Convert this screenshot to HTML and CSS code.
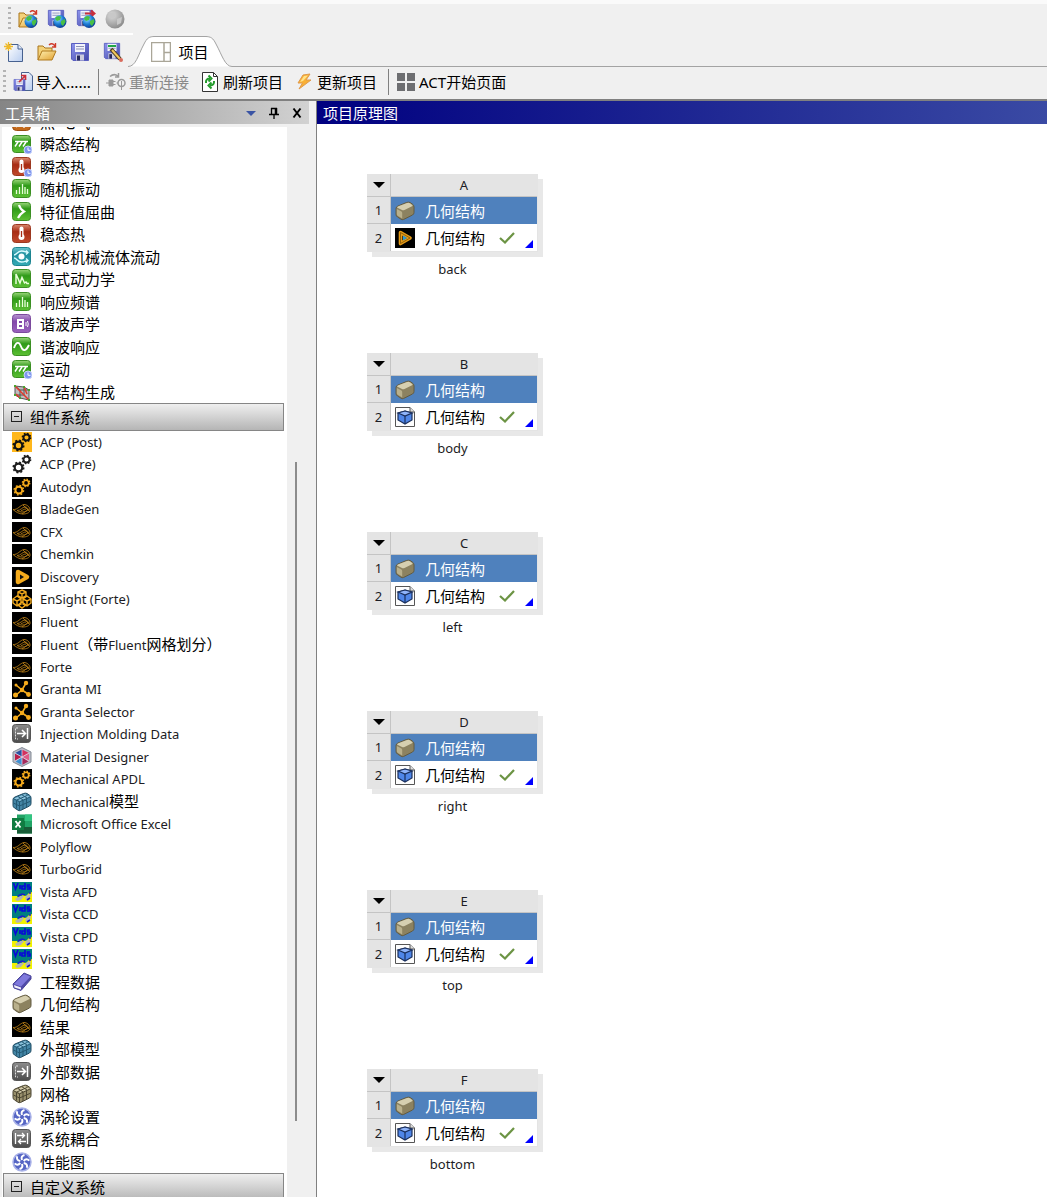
FILE: index.html
```html
<!DOCTYPE html>
<html lang="zh-CN">
<head>
<meta charset="utf-8">
<meta name="viewport" content="width=device-width, initial-scale=1">
<title>项目 - Workbench</title>
<link rel="stylesheet" href="styles.css">
</head>
<body>
<svg class="sprite" aria-hidden="true">
  <defs>
    <linearGradient id="gGreen" x1="0" y1="0" x2="0" y2="1"><stop offset="0" stop-color="#9ad67a"/><stop offset=".35" stop-color="#2f9a18"/><stop offset="1" stop-color="#5cc034"/></linearGradient>
    <linearGradient id="gRed" x1="0" y1="0" x2="0" y2="1"><stop offset="0" stop-color="#d98970"/><stop offset=".4" stop-color="#a82c14"/><stop offset="1" stop-color="#c0492c"/></linearGradient>
    <linearGradient id="gTeal" x1="0" y1="0" x2="0" y2="1"><stop offset="0" stop-color="#6cc4cd"/><stop offset=".4" stop-color="#1d8f9e"/><stop offset="1" stop-color="#35abb6"/></linearGradient>
    <linearGradient id="gPurple" x1="0" y1="0" x2="0" y2="1"><stop offset="0" stop-color="#b794d0"/><stop offset=".4" stop-color="#8449ab"/><stop offset="1" stop-color="#9a63bd"/></linearGradient>
    <linearGradient id="gGrey" x1="0" y1="0" x2="0" y2="1"><stop offset="0" stop-color="#8c8c8c"/><stop offset="1" stop-color="#4b4b4b"/></linearGradient>
    <linearGradient id="gFolder" x1="0" y1="0" x2="1" y2="1"><stop offset="0" stop-color="#fff0b0"/><stop offset="1" stop-color="#e0a030"/></linearGradient>
    <linearGradient id="gDisk" x1="0" y1="0" x2="1" y2="1"><stop offset="0" stop-color="#8f96ee"/><stop offset="1" stop-color="#4247a8"/></linearGradient>
    <linearGradient id="gPage" x1="0" y1="0" x2="1" y2="1"><stop offset="0" stop-color="#ffffff"/><stop offset="1" stop-color="#b8cdf0"/></linearGradient>
    <radialGradient id="gGlobe" cx=".35" cy=".3" r=".8"><stop offset="0" stop-color="#9fe4ff"/><stop offset=".5" stop-color="#1b7ed6"/><stop offset="1" stop-color="#0a2d86"/></radialGradient>
    <radialGradient id="gBall" cx=".35" cy=".3" r=".8"><stop offset="0" stop-color="#dcdcdc"/><stop offset="1" stop-color="#858585"/></radialGradient>

    <symbol id="clock" viewBox="0 0 20 20"><circle cx="16" cy="16" r="4" fill="#7d95ee" stroke="#c9d4fb"/><path d="M16 13.5V16.300H18.500" stroke="#fff" fill="none"/></symbol>
    <symbol id="structural" viewBox="0 0 20 20"><rect x=".5" y="1.500" width="18" height="17" rx="3" fill="url(#gGreen)" stroke="#3b8f23"/><path d="M3 7.500H16M6 8L3 12.500M10 8L7 12.500M14 8L11 12.500" stroke="#fff" stroke-width="1.500" fill="none"/><use href="#clock"/></symbol>
    <symbol id="thermal" viewBox="0 0 20 20"><rect x=".5" y=".5" width="18" height="18" rx="3" fill="url(#gRed)" stroke="#9c3820"/><rect x="7.500" y="2.500" width="4" height="10" rx="2" fill="#fff"/><circle cx="9.500" cy="13" r="3" fill="#fff"/><path d="M9.500 7V13" stroke="#a82c14" stroke-width="1.300"/></symbol>
    <symbol id="thermalTime" viewBox="0 0 20 20"><use href="#thermal"/><use href="#clock"/></symbol>
    <symbol id="bars" viewBox="0 0 20 20"><rect x=".5" y=".5" width="18" height="18" rx="3" fill="url(#gGreen)" stroke="#3b8f23"/><path d="M4.500 15V11M7.500 15V8M10.500 15V5M13 15V8M15.500 15V10" stroke="#e9ffd9" stroke-width="1.300"/></symbol>
    <symbol id="buckling" viewBox="0 0 20 20"><rect x=".5" y=".5" width="18" height="18" rx="3" fill="url(#gGreen)" stroke="#3b8f23"/><path d="M7 3Q8 7 12 9.500Q8 12 6 16" stroke="#fff" stroke-width="2.200" fill="none"/></symbol>
    <symbol id="turbo" viewBox="0 0 20 20"><rect x=".5" y=".5" width="18" height="18" rx="3" fill="url(#gTeal)" stroke="#1c8490"/><circle cx="9.500" cy="9.500" r="3" fill="#fff"/><path d="M2 8C5 8 5 4 9.500 4C13 4 14 5.500 16 5.500M2 11C5 11 5 15 9.500 15C13 15 14 13.500 16 13.500M14 3.500L16 5.500L14 7.500M14 11.500L16 13.500L14 15.500" stroke="#d8fbff" stroke-width="1.400" fill="none"/></symbol>
    <symbol id="explicit" viewBox="0 0 20 20"><rect x=".5" y=".5" width="18" height="18" rx="3" fill="url(#gGreen)" stroke="#3b8f23"/><path d="M4 15V5L8 14L10 8.500L12.500 14L14 13L15 14.500H17" stroke="#e9ffd9" stroke-width="1.500" fill="none"/></symbol>
    <symbol id="acoustic" viewBox="0 0 20 20"><rect x=".5" y=".5" width="18" height="18" rx="3" fill="url(#gPurple)" stroke="#7b4a9d"/><path d="M5 5H12V15H5Z" fill="#fff"/><path d="M7 7H10V9H7ZM7 11H10V13H7Z" fill="#8449ab"/><path d="M14 8V12M15.500 7Q17 10 15.500 13" stroke="#fff" fill="none"/></symbol>
    <symbol id="sine" viewBox="0 0 20 20"><rect x=".5" y=".5" width="18" height="18" rx="3" fill="url(#gGreen)" stroke="#3b8f23"/><path d="M2 11C4 5 7 4 9 9.500C11 15 14 14 17 8" stroke="#fff" stroke-width="1.900" fill="none"/></symbol>
    <symbol id="substructure" viewBox="0 0 20 20"><path d="M3 4L12 5L17 8V18L8 16L3 13Z" fill="#bdbdbd" stroke="#555"/><path d="M3 4L8 8L17 8M8 8V16M12 5V13L3 13M12 13L17 18" fill="none" stroke="#555"/><path d="M3 4L17 18M12 5L15 12M4 12L8 16" stroke="#e03a2c" stroke-width="1.500"/><path d="M2 3h2v2H2zM11 4h2v2h-2zM16 7h2v2h-2zM7 15h2v2H7zM16 17h2v2h-2zM2 12h2v2H2z" fill="#4aa52c"/></symbol>
    <symbol id="orangeCut" viewBox="0 0 20 20"><rect x=".5" y=".5" width="18" height="18" rx="4" fill="#c3691b" stroke="#9c4d10"/><path d="M4 15L8 12L12 15L16 12" stroke="#fff" fill="none" stroke-width="1.500"/></symbol>

    <g id="gears" fill="none"><circle cx="6.500" cy="13.500" r="3.800" stroke-width="2.200"/><circle cx="6.500" cy="13.500" r="5.300" stroke-width="1.500" stroke-dasharray="2 2.163"/><circle cx="14.500" cy="5.500" r="3" stroke-width="1.900"/><circle cx="14.500" cy="5.500" r="4.200" stroke-width="1.300" stroke-dasharray="1.600 1.699"/></g>
    <symbol id="gearsPost" viewBox="0 0 20 20"><rect width="20" height="20" fill="#ffb71b"/><use href="#gears" stroke="#111"/></symbol>
    <symbol id="gearsPre" viewBox="0 0 20 20"><use href="#gears" stroke="#1c1c1c"/></symbol>
    <symbol id="gearsDark" viewBox="0 0 20 20"><rect width="20" height="20" fill="#000"/><use href="#gears" stroke="#f5ab1c" transform="translate(1 1) scale(.9)"/></symbol>
    <symbol id="fluid" viewBox="0 0 20 20"><rect width="20" height="20" fill="#000"/><path d="M1 10.500C6 11 8 6 12 5.500C15 5.500 18 8 18 11C18 14 14 15 11 15C7 15 4 13 1 10.500ZM5 11.500C9 11.500 10 8 13 8C16 8 16.500 11 14.500 12C12 13.500 8 13.500 5 11.500M9 11.500C11 11.500 11.500 10 14 10M10 15L17 10M11 6L17 12" fill="none" stroke="#b37a16" stroke-width=".9"/></symbol>
    <symbol id="discovery" viewBox="0 0 20 20"><rect width="20" height="20" fill="#000"/><path d="M6 5L15 10L6 15Z" fill="none" stroke="#f5ab1c" stroke-width="4.500" stroke-linejoin="round"/><path d="M8 7.500L12 10L8 12.500Z" fill="#111"/></symbol>
    <symbol id="ensight" viewBox="0 0 20 20"><rect width="20" height="20" fill="#000"/><g fill="none" stroke="#f0a81c" stroke-width="1.400"><path d="M10 1L14 3V7L10 9L6 7V3ZM6 3L10 5L14 3M10 5V9M5 7L9 10V15L5 17L1 14V10ZM1 10L5 12L9 10M5 12V17M15 7L19 10V14L15 17L11 15V10ZM11 10L15 12L19 10M15 12V17M10 13L14 16L10 19L6 16Z"/></g></symbol>
    <symbol id="granta" viewBox="0 0 20 20"><rect width="20" height="20" fill="#000"/><path d="M10 11L14 4M10 11L4 6M10 11L4 16M10 11L16 15" stroke="#f5ab1c" stroke-width="1.600"/><g fill="#f5ab1c"><circle cx="14" cy="4" r="2.200"/><circle cx="4" cy="6" r="1.500"/><circle cx="10" cy="11" r="2.200"/><circle cx="3.500" cy="16" r="2.500"/><circle cx="16.500" cy="15.500" r="2.400"/></g></symbol>
    <symbol id="external" viewBox="0 0 20 20"><rect x=".5" y=".5" width="18" height="18" rx="3" fill="url(#gGrey)" stroke="#555"/><path d="M6 4H3.500V15H6" stroke="#ddd" stroke-dasharray="2 1" fill="none"/><path d="M5 9.500H13M10 6L13.500 9.500L10 13M15.500 4V15" stroke="#fff" stroke-width="1.500" fill="none"/></symbol>
    <symbol id="coupling" viewBox="0 0 20 20"><rect x=".5" y=".5" width="18" height="18" rx="3" fill="url(#gGrey)" stroke="#555"/><path d="M3.500 4V15M15.500 4V15M5 6.500H12M10 4L12.500 6.500L10 9M14 12.500H7M9 10L6.500 12.500L9 15" stroke="#fff" stroke-width="1.300" fill="none"/></symbol>
    <symbol id="material" viewBox="0 0 20 20"><path d="M10 .5L19 5V15L10 19.500L1 15V5Z" fill="#b9bdc6" stroke="#858b96"/><path d="M10 2.500L17 6L10 10Z" fill="#d3315e"/><path d="M10 2.500L3 6L10 10Z" fill="#2b4fa0"/><path d="M3 6.500V14L10 10Z" fill="#b81f4a"/><path d="M17 6.500V14L10 10Z" fill="#e05a86"/><path d="M3.500 14.500L10 18V10Z" fill="#3f8fd0"/><path d="M16.500 14.500L10 18V10Z" fill="#a52a5c"/><path d="M10 2V18M3 6L17 14M17 6L3 14" stroke="#e4e4f0" stroke-width=".7"/></symbol>
    <path id="boxShape" stroke-linejoin="round" d="M1 7.500Q1 5.800 3 5L11.500 1.500Q13.500 .8 15 1.500L17.500 3.200Q19 4 19 6V11.500Q19 13 17.500 14L8.500 18.500Q7 19 6 18.200L2.500 16Q1 15 1 13.500Z"/>
    <symbol id="geometry" viewBox="0 0 20 20"><use href="#boxShape" fill="#8c8260" stroke="#635b40"/><path d="M2 6.500Q2 5.500 4 5L12 2Q14 1.500 15 2.200L17.500 4.200Q17.800 5 16.500 5.500L9.500 9Q8 9.500 7 9Z" fill="#d6cfb0"/><path d="M1.800 8L6.500 10.500Q7.200 11 7.200 12V17.500L3 15Q1.800 14.500 1.800 13Z" fill="#b9b08c"/></symbol>
    <g id="meshLines" fill="none"><path d="M2 7L7.500 9.800L18.500 4.800M7.500 9.800V18M4.500 8.500V16.500M11 8.300V17M14.500 6.700V15.500M1.500 11L7.500 14L18.500 9.200M4.800 8L15.500 3.300M6 4.500L11 8M10 2.800L15 6"/></g>
    <symbol id="mesh" viewBox="0 0 20 20"><use href="#boxShape" fill="#99906c" stroke="#484330"/><path d="M2 6.500L13 2L18 5L8 9Z" fill="#d3cbaa"/><use href="#meshLines" stroke="#4d4732"/></symbol>
    <symbol id="model" viewBox="0 0 20 20"><use href="#boxShape" fill="#4385a5" stroke="#1f4b62"/><path d="M2 6.500L13 2L18 5L8 9Z" fill="#8cc3dc"/><use href="#meshLines" stroke="#245a75"/></symbol>
    <symbol id="excel" viewBox="0 0 20 20"><path d="M5 .5H20V19.500H5Z" fill="#21a366"/><path d="M13 .5H20V7H13Z" fill="#33c481"/><path d="M5 7H13V13H5Z" fill="#107c41"/><path d="M5 13H20V19.500H5Z" fill="#185c37"/><rect y="4" width="12" height="12" fill="#107c41"/><path d="M3.500 7L8.500 13.500M8.500 7L3.500 13.500" stroke="#fff" stroke-width="1.900"/></symbol>
    <symbol id="vista" viewBox="0 0 20 20"><rect width="20" height="20" fill="#007f7f"/><path d="M1.500 1L3.500 7L6 1M8 3V7M13 1V7H10V4H13M18 3H15.500V5H18V7H15" stroke="#0808d8" stroke-width="1.700" fill="none"/><path d="M0 20V14H5L6 16L11 13L14 14L17 11L20 10V20Z" fill="#f2f200"/><path d="M3 17L8 14L12 14L9 18L5 19ZM13 16L15 13L18 12L19 14L15 19Z" fill="#b4b4b4"/><path d="M6 14L10 12L13 13M15 18L18 16M17 11H19" stroke="#1b1bd0" stroke-width="1.600" fill="none"/></symbol>
    <symbol id="book" viewBox="0 0 20 20"><path d="M1 12L12 1L19 4V7L9 18.500L2 16Z" fill="#504ba8" stroke="#4a459a" stroke-linejoin="round"/><path d="M2 12L12 2L18.500 4.500L9 14.500Z" fill="#7f79dc"/><path d="M2 13L9 15.500V17.500L2.500 15.500Z" fill="#f1f1fb"/></symbol>
    <symbol id="swirl" viewBox="0 0 20 20"><circle cx="10" cy="10" r="9" fill="#5565c4" stroke="#a9b2e8" stroke-width="1.500"/><g fill="none" stroke="#fff" stroke-width="2"><path id="blade" d="M10 8Q8.500 4 12.500 3"/><use href="#blade" transform="rotate(60 10 10)"/><use href="#blade" transform="rotate(120 10 10)"/><use href="#blade" transform="rotate(180 10 10)"/><use href="#blade" transform="rotate(240 10 10)"/><use href="#blade" transform="rotate(300 10 10)"/></g><circle cx="10" cy="10" r="1.200" fill="#5565c4"/></symbol>

    <symbol id="globe" viewBox="0 0 20 20"><circle cx="13" cy="12.500" r="6.500" fill="url(#gGlobe)"/><path d="M9 8Q12 6 14 8L13 11L10 12L8 10ZM14 12L18 10L18.500 13L16 17L14 15Z" fill="#49c045"/></symbol>
    <symbol id="folder" viewBox="0 0 20 20"><path d="M1 18V4H6L8 6H15V9" fill="#f3d27a" stroke="#a9741b"/><path d="M1 18L5 9H19L15 18Z" fill="url(#gFolder)" stroke="#b07a1e"/><path d="M12 3Q15 0 18 4M18.500 1V5H15" stroke="#cf3a2a" stroke-width="1.400" fill="none"/></symbol>
    <symbol id="disk" viewBox="0 0 20 20"><path d="M1.500 1.500H18.500V18.500H3L1.500 17Z" fill="url(#gDisk)" stroke="#5a5fc0"/><rect x="5" y="2" width="10" height="8" fill="#f3f4fb"/><path d="M6 4.500H14M6 7H14" stroke="#8c92b8"/><rect x="6" y="12.500" width="8" height="6" fill="#ccd"/><rect x="7" y="13.500" width="3" height="5" fill="#26285c"/></symbol>
    <symbol id="folderGlobe" viewBox="0 0 20 20"><use href="#folder"/><use href="#globe"/></symbol>
    <symbol id="diskGlobe" viewBox="0 0 20 20"><use href="#disk" width="18" height="18"/><use href="#globe"/></symbol>
    <symbol id="diskArrow" viewBox="0 0 20 20"><use href="#disk" width="18" height="18"/><path d="M9 4.500H18M15 1.500L18.500 4.500L15 7.500" stroke="#c92f3b" stroke-width="2" fill="none"/><use href="#globe"/></symbol>
    <symbol id="ball" viewBox="0 0 20 20"><circle cx="10" cy="10" r="9.500" fill="url(#gBall)"/><path d="M5 4L10 3L11 7L7 10L3 8ZM12 10L17 8L16 14L12 16Z" fill="#c8c8c8"/></symbol>
    <symbol id="newFile" viewBox="0 0 20 20"><path d="M4.500 2.500H14L18.500 7V19.500H4.500Z" fill="url(#gPage)" stroke="#47618f"/><path d="M14 2.500V7H18.500" fill="#dfe9fa" stroke="#47618f"/><path d="M4.500 0V9M0 4.500H9M1.500 1.500L7.500 7.500M7.500 1.500L1.500 7.500" stroke="#efba2b" stroke-width="1.300"/></symbol>
    <symbol id="diskPen" viewBox="0 0 20 20"><use href="#disk" width="18" height="18"/><path d="M5 4H13" stroke="#21a648" stroke-width="2"/><path d="M8 7L17 17" stroke="#4b3b20" stroke-width="4"/><path d="M9 8L17 17" stroke="#f0c55a" stroke-width="2"/><circle cx="18" cy="18" r="2" fill="#d96b5c"/></symbol>
    <symbol id="import" viewBox="0 0 20 20"><path d="M8.500 .5H16L19.500 4V18.500H8.500Z" fill="url(#gPage)" stroke="#47618f"/><use href="#disk" y="6" width="13" height="14"/><path d="M6 10L12 4M8 3.500H12.500V8" stroke="#c92f3b" stroke-width="1.700" fill="none"/></symbol>
    <symbol id="reconnect" viewBox="0 0 20 20"><g stroke="#9a9a9a" fill="none"><path d="M3 8H7V14H3ZM7 9.500H9.500M7 12.500H9.500M0 11H3" fill="#9a9a9a"/><circle cx="15.500" cy="11" r="3.500" stroke-width="1.500"/><path d="M15.500 9V18M10.500 11H12"/><path d="M4 4.500Q8 1 12 4M12.500 1V5H9" stroke-width="1.500"/></g></symbol>
    <symbol id="refresh" viewBox="0 0 20 20"><path d="M2.500 .5H13.500L17.500 4.500V19.500H2.500Z" fill="#fff" stroke="#333"/><path d="M13.500 .5V4.500H17.500" fill="none" stroke="#333"/><path d="M6 11Q5.500 6.500 10 6.500M8.500 3.500L11.500 6.500L8.500 9.500M14 9Q14.500 13.500 10 13.500M11.500 10.500L8.500 13.500L11.500 16.500" stroke="#239b2c" stroke-width="2" fill="none"/></symbol>
    <symbol id="bolt" viewBox="0 0 20 20"><path d="M9 3L16 2L12 8H17L5 17L8.500 11H4Z" fill="#f9b034" stroke="#e09a4a" stroke-linejoin="round"/><path d="M10 4L14 3.500L9 9L6 10Z" fill="#ffe38a"/></symbol>
    <symbol id="tiles" viewBox="0 0 20 20"><path d="M1 1H9V9H1ZM11 1H19V9H11ZM1 11H9V19H1ZM11 11H19V19H11Z" fill="#6d6e71"/></symbol>
    <symbol id="layout" viewBox="0 0 20 20"><path d="M.5 .5H19.500V19.500H.5ZM13 .5V19.500M13 10.500H19.500" fill="#fff" stroke="#aaa698" stroke-width="1.500"/></symbol>
    <symbol id="discoveryCell" viewBox="0 0 20 20"><rect width="20" height="20" fill="#000"/><path d="M5.500 4.500L15 10L5.500 15.500Z" fill="#111" stroke="#e59b17" stroke-width="3.600" stroke-linejoin="round"/><path d="M5.500 4.500L15 10L5.500 15.500Z" fill="none" stroke="#6d4503" stroke-width=".7"/><path d="M8 7.500L12 10L8 12.500Z" fill="#2b9bd8"/></symbol>
    <symbol id="cubeDoc" viewBox="0 0 20 20"><path d="M.5 .5H15L19.500 5V19.500H.5Z" fill="#fdfdfd" stroke="#555"/><path d="M15 .5V5H19.500" fill="#ddd" stroke="#555"/><path d="M10 4L17 6V13L10 17L3 13V6Z" fill="#4f86e8" stroke="#1a2f5c" stroke-width="1.200"/><path d="M3 6L10 9L17 6L10 4Z" fill="#8fb4fa" stroke="#1a2f5c" stroke-width="1.200"/><path d="M10 9V17" stroke="#1a2f5c" stroke-width="1.200"/></symbol>
    <symbol id="check" viewBox="0 0 16 12"><path d="M1 6L6 10.500L15 1" fill="none" stroke="#6c9444" stroke-width="2.200"/></symbol>
  </defs>
</svg>

<div class="app">
  <header class="chrome">
    <div class="bar bar-remote">
      <span class="grip"></span>
      <button class="tool" aria-label="打开远程项目"><svg><use href="#folderGlobe"/></svg></button>
      <button class="tool" aria-label="保存到远程"><svg><use href="#diskGlobe"/></svg></button>
      <button class="tool" aria-label="发送更改"><svg><use href="#diskArrow"/></svg></button>
      <button class="tool" aria-label="远程连接" disabled><svg><use href="#ball"/></svg></button>
    </div>
    <div class="bar bar-file">
      <div class="file-tools">
        <button class="tool" aria-label="新建"><svg><use href="#newFile"/></svg></button>
        <button class="tool" aria-label="打开"><svg><use href="#folder"/></svg></button>
        <button class="tool" aria-label="保存"><svg><use href="#disk"/></svg></button>
        <button class="tool" aria-label="另存为"><svg><use href="#diskPen"/></svg></button>
      </div>
      <button class="tab">
        <svg class="tab-shape" viewBox="0 0 104 31" aria-hidden="true"><path d="M0 30.500C8 30.500 10 19 16 8C19 2 21 .5 27 .5H77C83 .5 85 2 88 8C94 19 97 30.500 104 30.500" fill="#fff" stroke="#a3a3a3"/></svg>
        <svg class="tab-icon"><use href="#layout"/></svg><span>项目</span>
      </button>
      <span class="tab-rule"></span>
    </div>
    <div class="bar bar-actions">
      <span class="grip"></span>
      <button class="action"><svg><use href="#import"/></svg>导入......</button>
      <span class="divider"></span>
      <button class="action" disabled><svg><use href="#reconnect"/></svg>重新连接</button>
      <button class="action gap-wide"><svg><use href="#refresh"/></svg>刷新项目</button>
      <button class="action gap-wide"><svg><use href="#bolt"/></svg>更新项目</button>
      <span class="divider gap-wide"></span>
      <button class="action"><svg><use href="#tiles"/></svg><span><span class="act">ACT</span>开始页面</span></button>
    </div>
  </header>

  <div class="workspace">
    <aside class="toolbox">
      <div class="pane-head toolbox-head">
        <h2>工具箱</h2>
        <button class="pane-btn" aria-label="菜单"><svg viewBox="0 0 12 12"><path d="M1 4H11L6 9Z" fill="#3a54a4"/></svg></button>
        <button class="pane-btn" aria-label="固定"><svg viewBox="0 0 12 12"><path d="M3.500 1V7M3 1.500H9M1 7.500H11M6 8V12" stroke="#000" stroke-width="1.300" fill="none"/><path d="M8 1V7" stroke="#000" stroke-width="2.500"/></svg></button>
        <button class="pane-btn" aria-label="关闭"><svg viewBox="0 0 12 12"><path d="M2.500 1.500L9.500 10.500M9.500 1.500L2.500 10.500" stroke="#000" stroke-width="2"/></svg></button>
      </div>
      <div class="toolbox-body">
        <div class="toolbox-list">
          <ul class="systems scrolled">
            <li><svg><use href="#orangeCut"/></svg>热-电气</li>
            <li><svg><use href="#structural"/></svg>瞬态结构</li>
            <li><svg><use href="#thermalTime"/></svg>瞬态热</li>
            <li><svg><use href="#bars"/></svg>随机振动</li>
            <li><svg><use href="#buckling"/></svg>特征值屈曲</li>
            <li><svg><use href="#thermal"/></svg>稳态热</li>
            <li><svg><use href="#turbo"/></svg>涡轮机械流体流动</li>
            <li><svg><use href="#explicit"/></svg>显式动力学</li>
            <li><svg><use href="#bars"/></svg>响应频谱</li>
            <li><svg><use href="#acoustic"/></svg>谐波声学</li>
            <li><svg><use href="#sine"/></svg>谐波响应</li>
            <li><svg><use href="#structural"/></svg>运动</li>
            <li><svg><use href="#substructure"/></svg>子结构生成</li>
          </ul>
          <button class="group" aria-expanded="true"><span class="minus"></span>组件系统</button>
          <ul class="systems">
            <li class="latin"><svg><use href="#gearsPost"/></svg>ACP (Post)</li>
            <li class="latin"><svg><use href="#gearsPre"/></svg>ACP (Pre)</li>
            <li class="latin"><svg><use href="#gearsDark"/></svg>Autodyn</li>
            <li class="latin"><svg><use href="#fluid"/></svg>BladeGen</li>
            <li class="latin"><svg><use href="#fluid"/></svg>CFX</li>
            <li class="latin"><svg><use href="#fluid"/></svg>Chemkin</li>
            <li class="latin"><svg><use href="#discovery"/></svg>Discovery</li>
            <li class="latin"><svg><use href="#ensight"/></svg>EnSight (Forte)</li>
            <li class="latin"><svg><use href="#fluid"/></svg>Fluent</li>
            <li><svg><use href="#fluid"/></svg><span><span class="latin">Fluent</span>（带<span class="latin">Fluent</span>网格划分）</span></li>
            <li class="latin"><svg><use href="#fluid"/></svg>Forte</li>
            <li class="latin"><svg><use href="#granta"/></svg>Granta MI</li>
            <li class="latin"><svg><use href="#granta"/></svg>Granta Selector</li>
            <li class="latin"><svg><use href="#external"/></svg>Injection Molding Data</li>
            <li class="latin"><svg><use href="#material"/></svg>Material Designer</li>
            <li class="latin"><svg><use href="#gearsDark"/></svg>Mechanical APDL</li>
            <li><svg><use href="#model"/></svg><span><span class="latin">Mechanical</span>模型</span></li>
            <li class="latin"><svg><use href="#excel"/></svg>Microsoft Office Excel</li>
            <li class="latin"><svg><use href="#fluid"/></svg>Polyflow</li>
            <li class="latin"><svg><use href="#fluid"/></svg>TurboGrid</li>
            <li class="latin"><svg><use href="#vista"/></svg>Vista AFD</li>
            <li class="latin"><svg><use href="#vista"/></svg>Vista CCD</li>
            <li class="latin"><svg><use href="#vista"/></svg>Vista CPD</li>
            <li class="latin"><svg><use href="#vista"/></svg>Vista RTD</li>
            <li><svg><use href="#book"/></svg>工程数据</li>
            <li><svg><use href="#geometry"/></svg>几何结构</li>
            <li><svg><use href="#fluid"/></svg>结果</li>
            <li><svg><use href="#model"/></svg>外部模型</li>
            <li><svg><use href="#external"/></svg>外部数据</li>
            <li><svg><use href="#mesh"/></svg>网格</li>
            <li><svg><use href="#swirl"/></svg>涡轮设置</li>
            <li><svg><use href="#coupling"/></svg>系统耦合</li>
            <li><svg><use href="#swirl"/></svg>性能图</li>
          </ul>
          <button class="group" aria-expanded="true"><span class="minus"></span>自定义系统</button>
        </div>
        <div class="scroll-track"><span class="scroll-thumb"></span></div>
      </div>
    </aside>

    <main class="schematic">
      <div class="pane-head schematic-head"><h2>项目原理图</h2></div>
      <div class="canvas">
        <figure class="system">
          <table>
            <tr><th><span class="caret"></span></th><th>A</th></tr>
            <tr class="title"><th>1</th><td><div class="cell"><svg><use href="#geometry"/></svg>几何结构</div></td></tr>
            <tr><th>2</th><td><div class="cell"><svg><use href="#discoveryCell"/></svg>几何结构<svg class="check"><use href="#check"/></svg><span class="corner"></span></div></td></tr>
          </table>
          <figcaption>back</figcaption>
        </figure>
        <figure class="system">
          <table>
            <tr><th><span class="caret"></span></th><th>B</th></tr>
            <tr class="title"><th>1</th><td><div class="cell"><svg><use href="#geometry"/></svg>几何结构</div></td></tr>
            <tr><th>2</th><td><div class="cell"><svg><use href="#cubeDoc"/></svg>几何结构<svg class="check"><use href="#check"/></svg><span class="corner"></span></div></td></tr>
          </table>
          <figcaption>body</figcaption>
        </figure>
        <figure class="system">
          <table>
            <tr><th><span class="caret"></span></th><th>C</th></tr>
            <tr class="title"><th>1</th><td><div class="cell"><svg><use href="#geometry"/></svg>几何结构</div></td></tr>
            <tr><th>2</th><td><div class="cell"><svg><use href="#cubeDoc"/></svg>几何结构<svg class="check"><use href="#check"/></svg><span class="corner"></span></div></td></tr>
          </table>
          <figcaption>left</figcaption>
        </figure>
        <figure class="system">
          <table>
            <tr><th><span class="caret"></span></th><th>D</th></tr>
            <tr class="title"><th>1</th><td><div class="cell"><svg><use href="#geometry"/></svg>几何结构</div></td></tr>
            <tr><th>2</th><td><div class="cell"><svg><use href="#cubeDoc"/></svg>几何结构<svg class="check"><use href="#check"/></svg><span class="corner"></span></div></td></tr>
          </table>
          <figcaption>right</figcaption>
        </figure>
        <figure class="system">
          <table>
            <tr><th><span class="caret"></span></th><th>E</th></tr>
            <tr class="title"><th>1</th><td><div class="cell"><svg><use href="#geometry"/></svg>几何结构</div></td></tr>
            <tr><th>2</th><td><div class="cell"><svg><use href="#cubeDoc"/></svg>几何结构<svg class="check"><use href="#check"/></svg><span class="corner"></span></div></td></tr>
          </table>
          <figcaption>top</figcaption>
        </figure>
        <figure class="system">
          <table>
            <tr><th><span class="caret"></span></th><th>F</th></tr>
            <tr class="title"><th>1</th><td><div class="cell"><svg><use href="#geometry"/></svg>几何结构</div></td></tr>
            <tr><th>2</th><td><div class="cell"><svg><use href="#cubeDoc"/></svg>几何结构<svg class="check"><use href="#check"/></svg><span class="corner"></span></div></td></tr>
          </table>
          <figcaption>bottom</figcaption>
        </figure>
      </div>
    </main>
  </div>
</div>
</body>
</html>
```
FILE: styles.css
```css
* { box-sizing: border-box; }

body {
  margin: 0;
  background: #f0f0f0;
  color: #000;
  font: 15px/20px "Noto Sans CJK SC", "Noto Sans", sans-serif;
}

.latin {
  color: #1c1c24;
  font-family: "Noto Sans", sans-serif;
  font-size: 13px;
}

.act { font-family: "Noto Sans", sans-serif; }

button {
  margin: 0;
  padding: 0;
  border: 0;
  background: none;
  color: inherit;
  font: inherit;
}

svg {
  display: block;
  flex: none;
  width: 20px;
  height: 20px;
}

h2 {
  margin: 0;
  font-size: 15px;
  font-weight: 400;
  line-height: 20px;
}

.sprite {
  position: absolute;
  width: 0;
  height: 0;
}

.app {
  display: flex;
  flex-direction: column;
  height: 100vh;
  overflow: hidden;
}

/* Toolbars */

.chrome {
  flex: none;
  border-top: 4px solid #fafafa;
  border-bottom: 2px solid #808080;
}

.bar {
  display: flex;
  align-items: center;
}

.grip {
  width: 3px;
  height: 24px;
  background: repeating-linear-gradient(#b4b4b4 0 2px, transparent 2px 5px);
}

.bar-remote {
  gap: 9px;
  width: 133px;
  height: 31px;
  padding-left: 8px;
  border-bottom: 2px solid #fff;
}

.bar-remote .grip { margin-right: -2px; }

.bar-file {
  align-items: flex-end;
  height: 32px;
}

.file-tools {
  display: flex;
  gap: 13px;
  width: 128px;
  padding: 0 0 5px 4px;
}

.tab {
  position: relative;
  display: flex;
  align-items: center;
  justify-content: center;
  gap: 7px;
  width: 104px;
  height: 31px;
}

.tab-shape {
  position: absolute;
  inset: 0;
  width: 104px;
  height: 31px;
}

.tab-icon, .tab span { position: relative; }

.tab-rule {
  flex: 1;
  height: 1px;
  background: #a3a3a3;
}

.bar-actions {
  height: 32px;
  padding: 0 0 2px 3px;
  gap: 7px;
}

.action {
  display: flex;
  align-items: center;
  gap: 3px;
  white-space: nowrap;
}

.action:disabled { color: #8a8a8a; }

.gap-wide { margin-left: 4px; }

.divider {
  width: 1px;
  height: 26px;
  background: #808080;
}

/* Panes */

.workspace {
  display: flex;
  flex: 1;
  min-height: 0;
}

.pane-head {
  display: flex;
  align-items: center;
  flex: none;
  height: 23px;
  color: #fff;
}

.toolbox {
  display: flex;
  flex-direction: column;
  flex: none;
  width: 309px;
}

.toolbox-head {
  gap: 7px;
  padding: 0 4px 0 5px;
  background: linear-gradient(90deg, #858585, #d2d2d2);
}

.toolbox-head h2 { flex: 1; }

.pane-btn {
  display: grid;
  place-items: center;
  width: 16px;
  height: 16px;
}

.pane-btn svg {
  width: 12px;
  height: 12px;
}

.toolbox-body {
  display: flex;
  flex: 1;
  min-height: 0;
  padding: 3px 0 0 2px;
}

.toolbox-list {
  flex: 1;
  overflow: hidden;
  background: #fff;
}

.systems {
  display: grid;
  grid-auto-rows: 22px 23px;
  margin: 0;
  padding: 0;
  list-style: none;
}

.scrolled { margin-top: -16px; }

.systems li {
  display: flex;
  align-items: center;
  gap: 8px;
  padding: 0 0 1px 10px;
  white-space: nowrap;
}

.group {
  display: flex;
  align-items: center;
  gap: 8px;
  width: calc(100% - 4px);
  height: 28px;
  margin-left: 1px;
  padding: 0 0 1px 7px;
  border: 1px solid #868686;
  background: linear-gradient(#efefef, #b5b5b5);
}

.minus {
  display: grid;
  place-items: center;
  width: 11px;
  height: 11px;
  border: 1px solid #222;
}

.minus::before {
  content: "";
  width: 5px;
  height: 1px;
  background: #222;
}

.scroll-track {
  display: flex;
  flex: none;
  flex-direction: column;
  width: 22px;
  padding: 335px 0 76px 8px;
}

.scroll-thumb {
  flex: 1;
  width: 2px;
  background: #8c8c8c;
}

.schematic {
  display: flex;
  flex-direction: column;
  flex: 1;
  min-width: 0;
  margin-left: 7px;
  border-left: 1px solid #808080;
  background: #fff;
}

.schematic-head {
  padding-left: 6px;
  background: linear-gradient(90deg, #000080, #3a4aa4);
}

.canvas {
  display: flex;
  flex-direction: column;
  align-items: flex-start;
  gap: 74px;
  padding: 50px;
}

/* Schematic systems */

.system {
  flex: none;
  margin: 0;
  color: #1c1c24;
  font-family: "Noto Sans", sans-serif;
  font-size: 13px;
}

.system table {
  width: 171px;
  border-collapse: separate;
  border-spacing: 0;
  border-right: 1px solid #e4e4e4;
  border-bottom: 1px solid #e4e4e4;
  background: #fff;
  box-shadow: 5px 5px 0 #e8e8e8;
}

.system th {
  height: 27px;
  padding: 0;
  border-right: 1px solid #c4c4c4;
  border-bottom: 1px solid #c4c4c4;
  background: #e4e4e4;
  font-weight: 400;
}

.system tr:first-child th { height: 23px; }

.system th:first-child { width: 24px; }

.system th:last-child { border-right: 0; }

.system tr:last-child th { border-bottom: 0; }

.system td {
  padding: 0;
  color: #000;
}

.system .title td {
  background: #4f81bd;
  color: #fff;
}

.caret {
  display: block;
  width: 12px;
  margin: 0 auto;
  border: 6px solid transparent;
  border-top-color: #000;
  border-bottom: 0;
}

.cell {
  position: relative;
  display: flex;
  align-items: center;
  gap: 10px;
  height: 27px;
  padding-left: 4px;
  font-family: "Noto Sans CJK SC", sans-serif;
  font-size: 15px;
}

.check {
  width: 16px;
  height: 12px;
  margin-left: 4px;
}

.corner {
  position: absolute;
  right: 4px;
  bottom: 3px;
  border-left: 8px solid transparent;
  border-bottom: 8px solid #0000ff;
}

.system figcaption {
  margin-top: 7px;
  text-align: center;
}
```
